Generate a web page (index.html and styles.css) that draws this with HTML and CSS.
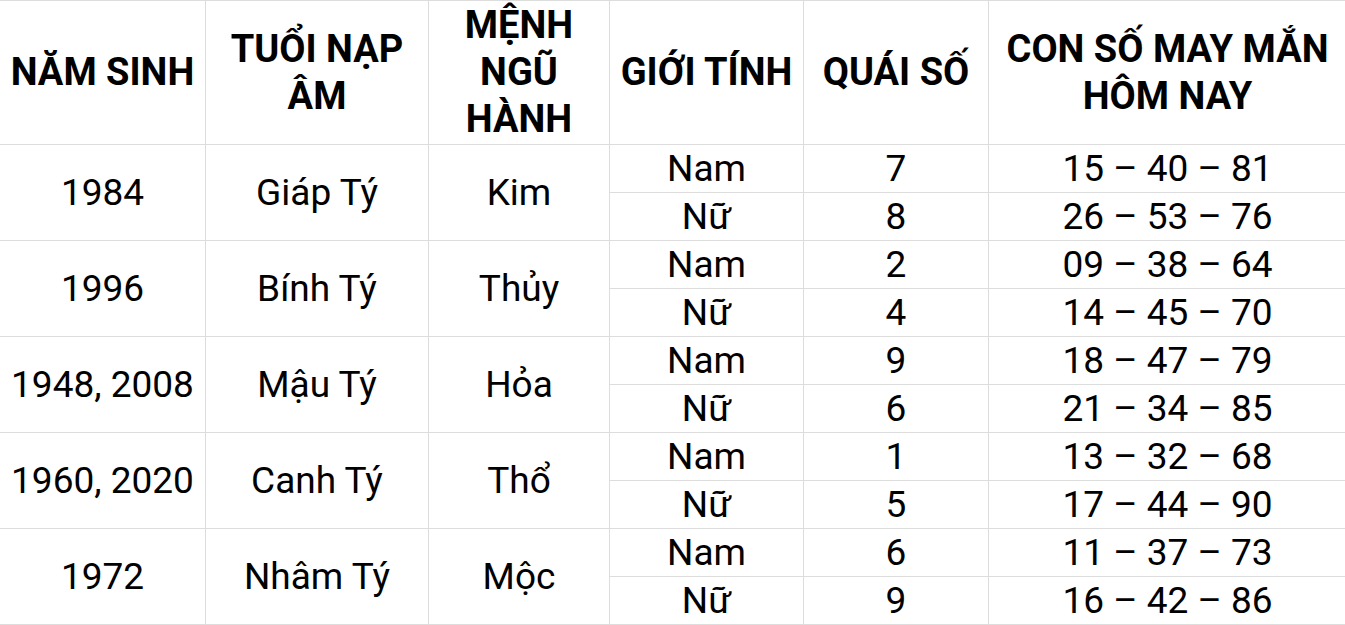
FILE: index.html
```html
<!DOCTYPE html>
<html lang="vi">
<head>
<meta charset="utf-8">
<link rel="stylesheet" href="styles.css">
</head>
<body>
<table class="luck">
  <colgroup>
    <col class="c1"><col class="c2"><col class="c3"><col class="c4"><col class="c5"><col class="c6">
  </colgroup>
  <thead>
    <tr>
      <th>NĂM SINH</th>
      <th>TUỔI NẠP ÂM</th>
      <th>MỆNH NGŨ HÀNH</th>
      <th>GIỚI TÍNH</th>
      <th>QUÁI SỐ</th>
      <th>CON SỐ MAY MẮN HÔM NAY</th>
    </tr>
  </thead>
  <tbody>
    <tr><td rowspan="2">1984</td><td rowspan="2">Giáp Tý</td><td rowspan="2">Kim</td><td>Nam</td><td>7</td><td>15 – 40 – 81</td></tr>
    <tr><td>Nữ</td><td>8</td><td>26 – 53 – 76</td></tr>
    <tr><td rowspan="2">1996</td><td rowspan="2">Bính Tý</td><td rowspan="2">Thủy</td><td>Nam</td><td>2</td><td>09 – 38 – 64</td></tr>
    <tr><td>Nữ</td><td>4</td><td>14 – 45 – 70</td></tr>
    <tr><td rowspan="2">1948, 2008</td><td rowspan="2">Mậu Tý</td><td rowspan="2">Hỏa</td><td>Nam</td><td>9</td><td>18 – 47 – 79</td></tr>
    <tr><td>Nữ</td><td>6</td><td>21 – 34 – 85</td></tr>
    <tr><td rowspan="2">1960, 2020</td><td rowspan="2">Canh Tý</td><td rowspan="2">Thổ</td><td>Nam</td><td>1</td><td>13 – 32 – 68</td></tr>
    <tr><td>Nữ</td><td>5</td><td>17 – 44 – 90</td></tr>
    <tr><td rowspan="2">1972</td><td rowspan="2">Nhâm Tý</td><td rowspan="2">Mộc</td><td>Nam</td><td>6</td><td>11 – 37 – 73</td></tr>
    <tr><td>Nữ</td><td>9</td><td>16 – 42 – 86</td></tr>
  </tbody>
</table>
</body>
</html>
```
FILE: styles.css
```css
html, body {
  margin: 0;
  padding: 0;
  background: #fff;
}
.luck {
  border-collapse: collapse;
  table-layout: fixed;
  width: 1347px;
  margin-left: -1px;
  font-family: Roboto, "Noto Sans", sans-serif;
  line-height: 47px;
  color: #000;
}
.c1 { width: 206px; }
.c2 { width: 223px; }
.c3 { width: 181px; }
.c4 { width: 194px; }
.c5 { width: 185px; }
.c6 { width: 358px; }
.luck th,
.luck td {
  border: 1px solid #dddddd;
  padding: 0;
  text-align: center;
  vertical-align: middle;
}
.luck th {
  font-size: 38px;
  font-weight: 700;
  height: 143px;
}
.luck td {
  font-size: 37px;
  font-weight: 400;
  line-height: 46px;
  height: 46px;
  padding-top: 1px;
}
```
